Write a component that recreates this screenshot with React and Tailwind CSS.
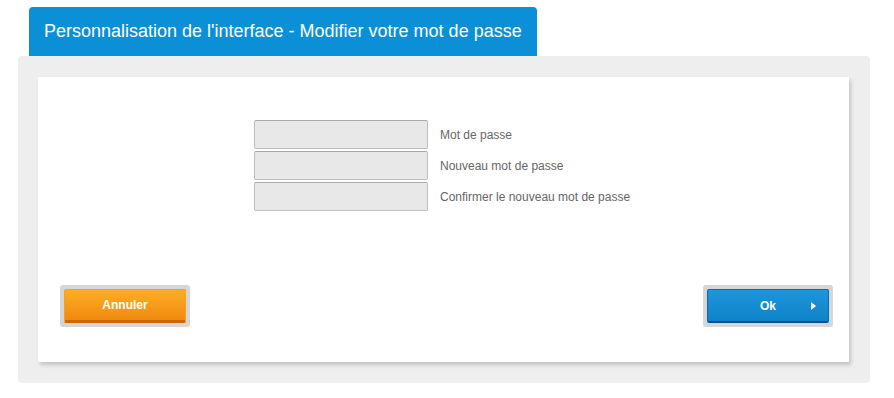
import React from 'react';

const fields = ['Mot de passe', 'Nouveau mot de passe', 'Confirmer le nouveau mot de passe'];

const App = () => {
  return (
    <div className="w-[894px] h-[398px] bg-white font-['Liberation_Sans',Arial,sans-serif] pt-[7px] pl-[18px]">
      {/* Title tab */}
      <div className="ml-[11px] w-[508px] h-[49px] bg-[#0b8fd6] rounded-t-[4px] flex items-center pl-[15px] pb-[1px]">
        <h1 className="text-white text-[18px] leading-none">Personnalisation de l'interface - Modifier votre mot de passe</h1>
      </div>

      {/* Outer panel */}
      <div className="w-[852px] h-[327px] bg-[#eeeeee] rounded-[4px] pt-[21px] pl-[20px]">
        <div className="w-[811px] h-[285px] bg-white shadow-[2px_3px_4px_rgba(0,0,0,0.18)] flex flex-col">
          <form className="flex flex-col gap-[2px] pl-[216px] pt-[43px]">
            {fields.map((label) => (
              <div key={label} className="flex items-center">
                <input
                  type="password"
                  className="w-[174px] h-[29px] bg-[#e8e8e8] border border-[#bdbdbd] border-t-[#a9a9a9] rounded-[2px] outline-none"
                />
                <span className="ml-[12px] text-[12px] text-[#666666]">{label}</span>
              </div>
            ))}
          </form>

          <div className="flex justify-between mt-auto mb-[35px] pl-[22px] pr-[16px]">
            <div className="p-[4px] bg-[#d6d6d6] rounded-[3px]">
              <button
                type="button"
                className="w-[122px] h-[34px] rounded-[2px] bg-gradient-to-b from-[#fcae24] to-[#f08a0e] border border-[#f4a020] border-b-[3px] border-b-[#c76a06] text-white text-[12px] font-bold"
              >
                Annuler
              </button>
            </div>
            <div className="p-[4px] bg-[#d6d6d6] rounded-[3px]">
              <button
                type="button"
                className="relative w-[122px] h-[34px] rounded-[2px] bg-gradient-to-b from-[#1d96dc] to-[#0f82c8] border border-[#0c6aa6] border-b-[2px] border-b-[#0a4f7e] text-white text-[12px] font-bold"
              >
                Ok
                <svg className="absolute right-[12px] top-1/2 -translate-y-1/2" width="5" height="8" viewBox="0 0 5 8">
                  <path d="M0 0 L5 4 L0 8 Z" fill="white" />
                </svg>
              </button>
            </div>
          </div>
        </div>
      </div>
    </div>
  );
};

export default App;
